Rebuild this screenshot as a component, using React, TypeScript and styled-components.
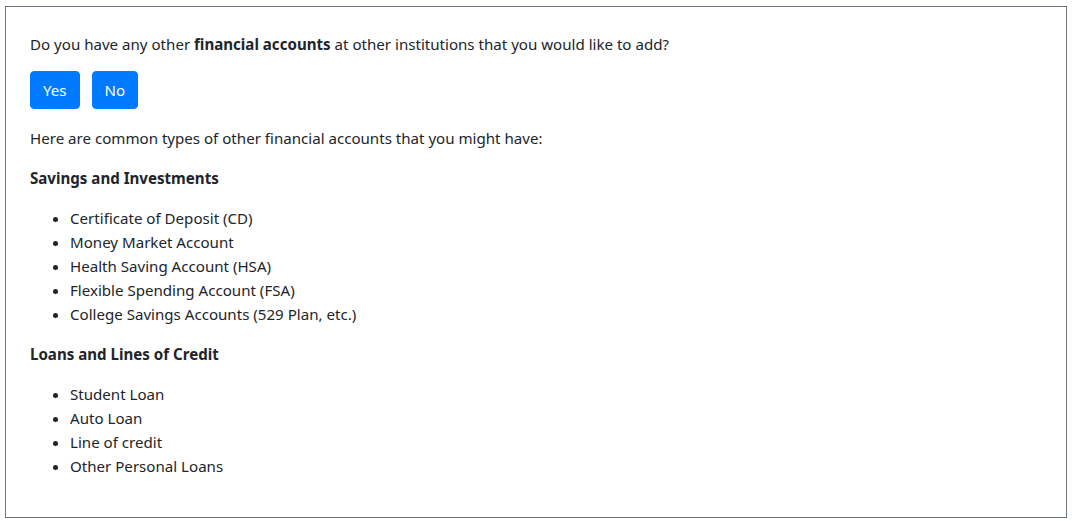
import React from "react";
import styled, { createGlobalStyle } from "styled-components";

const Global = createGlobalStyle`
  html, body { margin: 0; padding: 0; background: #fff; }
  body {
    font-family: "Noto Sans", "Open Sans", sans-serif;
    font-size: 15.1px;
    line-height: 24px;
    color: #212529;
  }
  * { box-sizing: border-box; }
`;

const Page = styled.div`
  padding: 6px 5px 3px 5px;
`;

const Card = styled.div`
  border: 1px solid #6c757d;
  padding: 25px 24px 22px 24px;
  height: 512px;
`;

const Para = styled.p<{ $tight?: boolean }>`
  margin: 0 0 ${(p) => (p.$tight ? 15 : 16)}px 0;
`;

const Heading = styled.p`
  margin: 0 0 16px 0;
  font-weight: 700;
`;

const ButtonRow = styled.div`
  display: flex;
  gap: 12px;
  margin-bottom: 17px;
`;

const Button = styled.button`
  font-family: inherit;
  font-size: 15.1px;
  line-height: 24px;
  color: #fff;
  background: #007bff;
  border: 1px solid #007bff;
  border-radius: 4px;
  padding: 6px 12px;
  height: 38px;
  cursor: pointer;
`;

const List = styled.ul`
  margin: 0 0 16px 0;
  padding-left: 40px;
`;

const Item = styled.li``;

export default function App() {
  return (
    <>
      <Global />
      <Page>
        <Card>
          <Para $tight>
            Do you have any other <strong>financial accounts</strong> at other institutions that you would like to add?
          </Para>
          <ButtonRow>
            <Button>Yes</Button>
            <Button>No</Button>
          </ButtonRow>
          <Para>Here are common types of other financial accounts that you might have:</Para>
          <Heading>Savings and Investments</Heading>
          <List>
            <Item>Certificate of Deposit (CD)</Item>
            <Item>Money Market Account</Item>
            <Item>Health Saving Account (HSA)</Item>
            <Item>Flexible Spending Account (FSA)</Item>
            <Item>College Savings Accounts (529 Plan, etc.)</Item>
          </List>
          <Heading>Loans and Lines of Credit</Heading>
          <List>
            <Item>Student Loan</Item>
            <Item>Auto Loan</Item>
            <Item>Line of credit</Item>
            <Item>Other Personal Loans</Item>
          </List>
        </Card>
      </Page>
    </>
  );
}
